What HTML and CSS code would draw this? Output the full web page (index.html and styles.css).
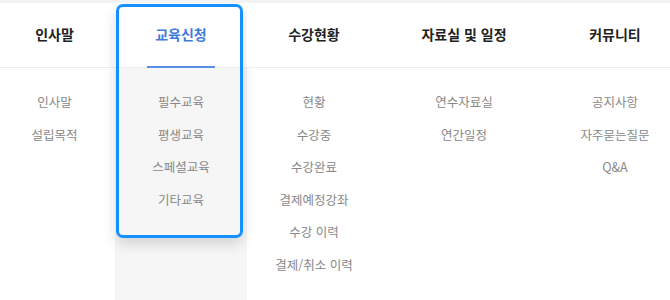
FILE: index.html
```html
<!DOCTYPE html>
<html lang="ko">
<head>
    <title>메뉴</title>
    <link rel="stylesheet" href="styles.css">
</head>
<body>
    <nav class="gnb">
        <div class="menu menu-1">
            <a class="menu-title" href="#">인사말</a>
            <ul class="sub">
                <li>인사말</li>
                <li>설립목적</li>
            </ul>
        </div>
        <div class="menu menu-2 active">
            <a class="menu-title" href="#">교육신청</a>
            <ul class="sub">
                <li>필수교육</li>
                <li>평생교육</li>
                <li>스페셜교육</li>
                <li>기타교육</li>
            </ul>
        </div>
        <div class="menu menu-3">
            <a class="menu-title" href="#">수강현황</a>
            <ul class="sub">
                <li>현황</li>
                <li>수강중</li>
                <li>수강완료</li>
                <li>결제예정강좌</li>
                <li>수강 이력</li>
                <li>결제/취소 이력</li>
            </ul>
        </div>
        <div class="menu menu-4">
            <a class="menu-title" href="#">자료실 및 일정</a>
            <ul class="sub">
                <li>연수자료실</li>
                <li>연간일정</li>
            </ul>
        </div>
        <div class="menu menu-5">
            <a class="menu-title" href="#">커뮤니티</a>
            <ul class="sub">
                <li>공지사항</li>
                <li>자주묻는질문</li>
                <li>Q&amp;A</li>
            </ul>
        </div>
    </nav>
</body>
</html>
```

FILE: styles.css
```css
body {
    margin: 0;
    width: 670px;
    height: 300px;
    overflow: hidden;
    background-color: #fff;
    font-family: "Noto Sans CJK KR", "Noto Sans", sans-serif;
    border-top: 3px solid #f3f3f3;
    box-sizing: border-box;
}
.gnb {
    display: flex;
    margin-left: -6px;
    height: 297px;
    position: relative;
}
.gnb::before {
    content: "";
    position: absolute;
    left: 0;
    right: 0;
    top: 64px;
    border-top: 1px solid #ededed;
}
.menu {
    position: relative;
    flex-shrink: 0;
    text-align: center;
}
.menu-1 { width: 121px; }
.menu-2 { width: 132px; background-color: #f6f6f6; }
.menu-3 { width: 134px; }
.menu-4 { width: 166px; }
.menu-5 { width: 136px; }
.menu-title {
    display: block;
    height: 64px;
    line-height: 62px;
    font-size: 14px;
    font-weight: 700;
    color: #222;
    text-decoration: none;
    background-color: #fff;
    position: relative;
}
.sub {
    list-style: none;
    margin: 0;
    padding: 18px 0 0;
    border-top: 1px solid #ededed;
}
.sub li {
    font-size: 12.5px;
    line-height: 32.6px;
    color: #888;
}
.active .menu-title {
    color: #3f7bdb;
}
.active .menu-title::after {
    content: "";
    position: absolute;
    left: 32px;
    width: 68px;
    bottom: -1px;
    border-top: 2px solid #5a8fe6;
}
.active::after {
    content: "";
    position: absolute;
    left: 1px;
    right: 4px;
    top: 1px;
    height: 234px;
    box-sizing: border-box;
    border: 3px solid #1490ff;
    border-radius: 7px;
    box-shadow: 0 6px 14px rgba(0, 0, 0, 0.14);
}
```
